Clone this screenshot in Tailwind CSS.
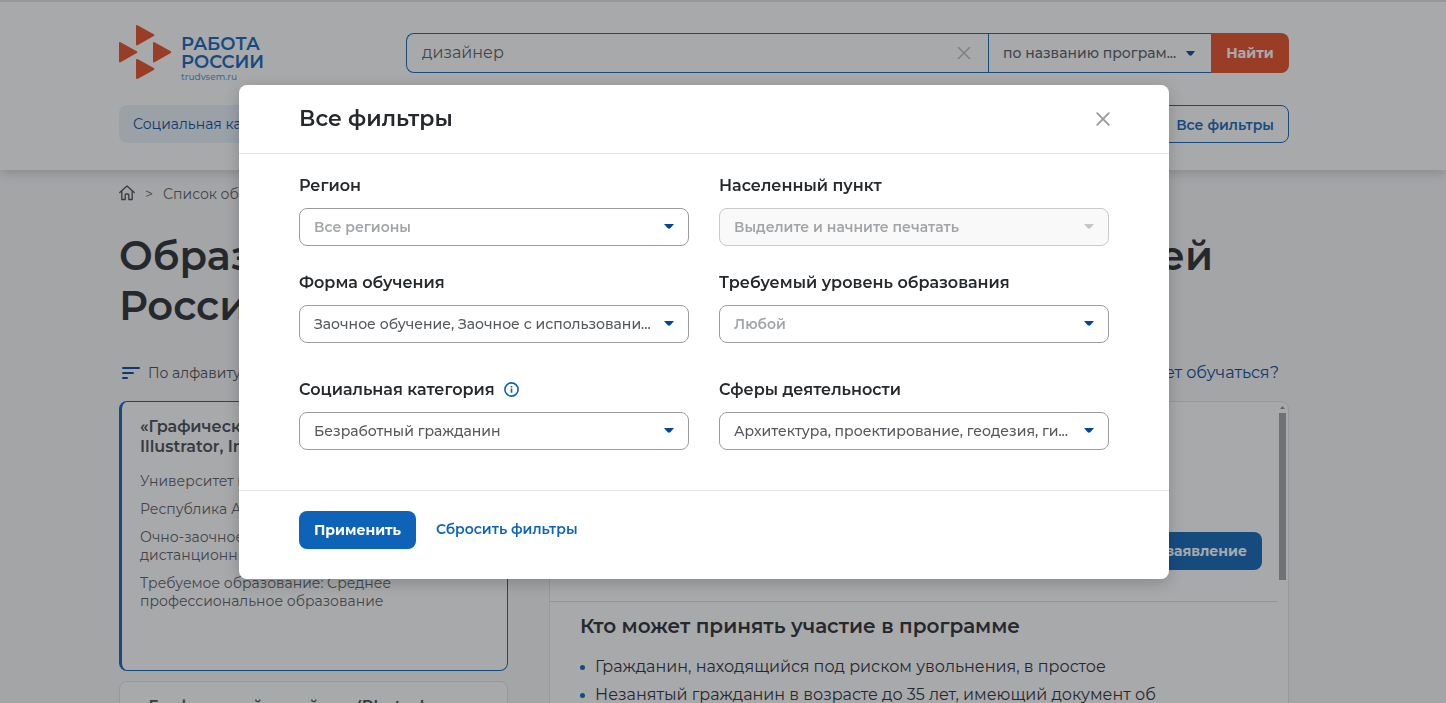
<!DOCTYPE html>
<html lang="ru">
<head>
<meta charset="utf-8">
<title>Работа России — Все фильтры</title>
<script src="https://cdn.jsdelivr.net/npm/@tailwindcss/browser@4"></script>
</head>
<body class="font-['Montserrat','Inter',sans-serif] text-[#26292c]">
<div class="h-screen overflow-hidden bg-[#f7f8f9]">
  <header class="border-t-2 border-[#e2e4e6] bg-white pr-[38px] shadow-[0_2px_12px_rgba(0,0,0,0.2)]">
    <div class="mx-auto flex h-[168px] max-w-[1170px] flex-col">
      <div class="flex h-[103px] items-start justify-between">
        <a href="#" class="mt-[23px] flex gap-2.5">
          <svg class="h-[54px] w-[52px]" viewBox="0 0 52 54" fill="#e64c24" stroke="#e64c24" stroke-width="2" stroke-linejoin="round" aria-hidden="true">
            <path d="M18 1v18.400l16.300-9.200zM1 18v18.400l16.300-9.200zM35 18v18.400l16.300-9.200zM18 35v18l16.300-9z"/>
          </svg>
          <span class="flex flex-col pt-2.5 text-lg leading-[18px] font-semibold text-[#0d63b8]">
            <span>РАБОТА</span><span>РОССИИ</span>
            <span class="text-[9px] leading-3 font-medium text-[#4f9ad2]">trudvsem.ru</span>
          </span>
        </a>
        <form class="mt-[31px] flex h-10 w-[883px]">
          <label class="flex flex-1 items-center rounded-l-lg border border-r-0 border-[#0d63b8] pr-[17px] pl-[15px]">
            <input type="text" value="дизайнер" aria-label="Поиск" class="min-w-0 flex-1 text-base text-[#55595d] outline-none">
            <button type="button" aria-label="Очистить">
              <svg class="size-3.5" viewBox="0 0 14 14" fill="none" stroke="#b9bcbe" stroke-width="1.500" stroke-linecap="round"><path d="M1.500 1.500l11 11M12.500 1.500l-11 11"/></svg>
            </button>
          </label>
          <div class="relative w-[223px]">
            <select aria-label="Область поиска" class="h-full w-full appearance-none border-y border-l border-[#0d63b8] pr-6 pl-3.5 text-sm font-medium text-[#55595d]"><option>по названию програм...</option></select>
            <svg class="pointer-events-none absolute top-[18px] right-4 h-[5px] w-[9px]" viewBox="0 0 9 5" fill="#00469b"><path d="M0 0h9L6 4Q4.500 5.500 3 4z"/></svg>
          </div>
          <button type="button" class="w-[78px] rounded-r-lg bg-[#e64c24] text-sm font-bold text-white">Найти</button>
        </form>
      </div>
      <div class="flex h-[38px] justify-between">
        <button type="button" class="rounded-lg bg-[#e8f3fb] px-3.5 text-sm text-[#004498]">Социальная категория</button>
        <button type="button" class="rounded-lg border border-[#0d63b8] pt-px pr-3.5 pl-10 text-sm font-semibold text-[#0d63b8]">Все фильтры</button>
      </div>
    </div>
  </header>

  <main class="pr-[38px]">
    <div class="mx-auto max-w-[1170px]">
      <nav class="flex h-[61px] items-start gap-2.5 pt-3.5 text-sm leading-5 text-[#55595d]">
        <a href="#" aria-label="Главная"><svg class="h-[18px] w-4" viewBox="0 0 16 18" fill="none" stroke="#44484c" stroke-width="1.300" stroke-linejoin="round" stroke-linecap="round"><path d="M.8 8.500L8 2l7.200 6.500M2.800 7v8.500h3.400v-4.500q0-1 1-1h1.600q1 0 1 1v4.500h3.400V7"/></svg></a>
        <span>&gt;</span>
        <a href="#">Список образовательных программ</a>
      </nav>
      <h1 class="text-[40px] leading-[50px] font-semibold">
        <span class="flex max-w-[1094px] justify-between"><span>Образовательные программы</span> <span>для жителей</span></span>
        <span class="block">России</span>
      </h1>
      <div class="flex h-[70px] items-center justify-between pt-3.5">
        <button type="button" class="flex items-center gap-[7px] pl-0.5 text-sm text-[#44484c]">
          <svg class="h-4 w-5" viewBox="0 0 20 16" stroke="#00469b" stroke-width="2" stroke-linecap="round"><path d="M2 3h16M2 8h10M2 13h4"/></svg>
          По алфавиту
        </button>
        <a href="#" class="pr-2.5 text-base text-[#004498]">Кто может обучаться?</a>
      </div>
      <div class="flex items-start gap-[41px]">
        <div class="flex w-[389px] shrink-0 flex-col gap-2.5 text-sm leading-[18px] text-[#55595d]">
          <article class="flex h-[270px] flex-col gap-2.5 rounded-lg border border-l-3 border-[#0d63b8] bg-white px-[18px] pt-[15px]">
            <h2 class="pb-[5px] text-base leading-5 font-semibold text-[#44484c]">«Графический дизайнер (Photoshop, Illustrator, InDesign)»</h2>
            <p>Университет инноваций</p>
            <p>Республика Адыгея</p>
            <p>Очно-заочное с использованием дистанционных технологий</p>
            <p>Требуемое образование: Среднее профессиональное образование</p>
          </article>
          <article class="rounded-lg border border-[#e2e4e6] bg-white px-5 pt-[15px] pb-10">
            <h2 class="text-base leading-5 font-semibold text-[#44484c]">«Графический дизайнер (Photoshop, Illustrator)»</h2>
          </article>
        </div>
        <section class="flex h-[400px] flex-1 rounded-lg border border-[#e2e4e6] bg-white pr-0.5">
          <div class="flex-1 pt-[130px]">
            <div class="flex justify-end border-b border-[#dcdee0] pr-[15px] pb-[31px]">
              <button type="button" class="h-[38px] rounded-lg bg-[#0d63b8] px-[15px] text-sm font-bold text-white">Подать заявление</button>
            </div>
            <div class="pt-3 pl-[30px]">
              <h2 class="text-xl leading-6 font-semibold">Кто может принять участие в программе</h2>
              <ul class="pt-[15px] text-base leading-7">
                <li class="flex items-center gap-2.5"><span class="size-[5px] rounded-full bg-[#0d63b8]"></span>Гражданин, находящийся под риском увольнения, в простое</li>
                <li class="flex items-center gap-2.5"><span class="size-[5px] rounded-full bg-[#0d63b8]"></span>Незанятый гражданин в возрасте до 35 лет, имеющий документ об</li>
              </ul>
            </div>
          </div>
          <div class="ml-0.5 flex w-[7px] flex-col items-center gap-1 pt-1">
            <svg class="h-[3px] w-[5px]" viewBox="0 0 5 3" fill="#8a8d91"><path d="M0 3h5L2.500 0z"/></svg>
            <span class="h-[167px] w-[7px] bg-[#a0a2a6]"></span>
          </div>
        </section>
      </div>
    </div>
  </main>
</div>

<div class="fixed inset-0 flex items-start justify-center bg-[#26292c]/40 pt-[85px] pr-[38px]">
  <div role="dialog" aria-modal="true" aria-labelledby="title" class="w-full max-w-[930px] rounded-lg bg-white shadow-[0_4px_16px_rgba(0,0,0,0.2)]">
    <div class="flex h-[69px] items-center justify-between border-b border-[#e2e4e6] pr-[59px] pl-[60px]">
      <h2 id="title" class="pb-0.5 text-[22px] font-semibold">Все фильтры</h2>
      <button type="button" aria-label="Закрыть"><svg class="size-3.5" viewBox="0 0 14 14" fill="none" stroke="#9a9da0" stroke-width="1.900" stroke-linecap="round"><path d="M1.200 1.200l11.600 11.600M12.800 1.200L1.200 12.800"/></svg></button>
    </div>
    <div class="grid grid-cols-2 gap-x-[30px] px-[60px] pt-5 pb-10">
      <div class="pb-[25px]">
        <label for="f1" class="flex h-[34px] text-base leading-6 font-semibold">Регион</label>
        <div class="relative h-[38px]"><select id="f1" class="h-full w-full appearance-none rounded-lg border border-[#9a9da0] bg-white pr-7 pl-3.5 text-sm font-semibold text-[#a2a5a8]"><option>Все регионы</option></select>
        <svg class="pointer-events-none absolute top-4 right-[15px] h-[5px] w-2.5" viewBox="0 0 10 5" fill="#00469b"><path d="M0 0h10L6.500 4Q5 5.500 3.500 4z"/></svg></div>
      </div>
      <div class="pb-[25px]">
        <label for="f2" class="flex h-[34px] text-base leading-6 font-semibold">Населенный пункт</label>
        <div class="relative h-[38px]"><select id="f2" disabled class="h-full w-full appearance-none rounded-lg border border-[#c8cacc] bg-[#f9f9f9] pr-7 pl-3.5 text-sm font-semibold text-[#a2a5a8] opacity-100"><option>Выделите и начните печатать</option></select>
        <svg class="pointer-events-none absolute top-4 right-[15px] h-[5px] w-2.5" viewBox="0 0 10 5" fill="#c4c6c8"><path d="M0 0h10L6.500 4Q5 5.500 3.500 4z"/></svg></div>
      </div>
      <div class="pb-[35px]">
        <label for="f3" class="flex h-[34px] text-base leading-6 font-semibold">Форма обучения</label>
        <div class="relative h-[38px]"><select id="f3" class="h-full w-full appearance-none rounded-lg border border-[#9a9da0] bg-white pr-7 pl-3.5 text-sm font-medium text-[#55595d]"><option>Заочное обучение, Заочное с использовани...</option></select>
        <svg class="pointer-events-none absolute top-4 right-[15px] h-[5px] w-2.5" viewBox="0 0 10 5" fill="#00469b"><path d="M0 0h10L6.500 4Q5 5.500 3.500 4z"/></svg></div>
      </div>
      <div class="pb-[35px]">
        <label for="f4" class="flex h-[34px] text-base leading-6 font-semibold">Требуемый уровень образования</label>
        <div class="relative h-[38px]"><select id="f4" class="h-full w-full appearance-none rounded-lg border border-[#9a9da0] bg-white pr-7 pl-3.5 text-sm font-semibold text-[#a2a5a8]"><option>Любой</option></select>
        <svg class="pointer-events-none absolute top-4 right-[15px] h-[5px] w-2.5" viewBox="0 0 10 5" fill="#00469b"><path d="M0 0h10L6.500 4Q5 5.500 3.500 4z"/></svg></div>
      </div>
      <div>
        <div class="flex h-[34px] gap-[9px]"><label for="f5" class="text-base leading-6 font-semibold">Социальная категория</label>
        <button type="button" aria-label="Подсказка" class="flex h-[22px] items-center"><svg class="size-[15px]" viewBox="0 0 15 15" fill="none" stroke="#0d63b8" stroke-width="1.600"><circle cx="7.500" cy="7.500" r="6.600"/><path d="M7.500 6.500v4.300M7.500 4v1.500"/></svg></button></div>
        <div class="relative h-[38px]"><select id="f5" class="h-full w-full appearance-none rounded-lg border border-[#9a9da0] bg-white pr-7 pl-3.5 text-sm font-medium text-[#55595d]"><option>Безработный гражданин</option></select>
        <svg class="pointer-events-none absolute top-4 right-[15px] h-[5px] w-2.5" viewBox="0 0 10 5" fill="#00469b"><path d="M0 0h10L6.500 4Q5 5.500 3.500 4z"/></svg></div>
      </div>
      <div>
        <label for="f6" class="flex h-[34px] text-base leading-6 font-semibold">Сферы деятельности</label>
        <div class="relative h-[38px]"><select id="f6" class="h-full w-full appearance-none rounded-lg border border-[#9a9da0] bg-white pr-7 pl-3.5 text-sm font-medium text-[#55595d]"><option>Архитектура, проектирование, геодезия, ги...</option></select>
        <svg class="pointer-events-none absolute top-4 right-[15px] h-[5px] w-2.5" viewBox="0 0 10 5" fill="#00469b"><path d="M0 0h10L6.500 4Q5 5.500 3.500 4z"/></svg></div>
      </div>
    </div>
    <div class="flex items-center gap-5 border-t border-[#e2e4e6] px-[60px] pt-5 pb-[30px]">
      <button type="button" class="h-[38px] rounded-lg bg-[#0d63b8] px-[15px] text-sm font-bold text-white">Применить</button>
      <button type="button" class="pb-0.5 text-sm font-semibold text-[#0d63b8]">Сбросить фильтры</button>
    </div>
  </div>
</div>
</body>
</html>
